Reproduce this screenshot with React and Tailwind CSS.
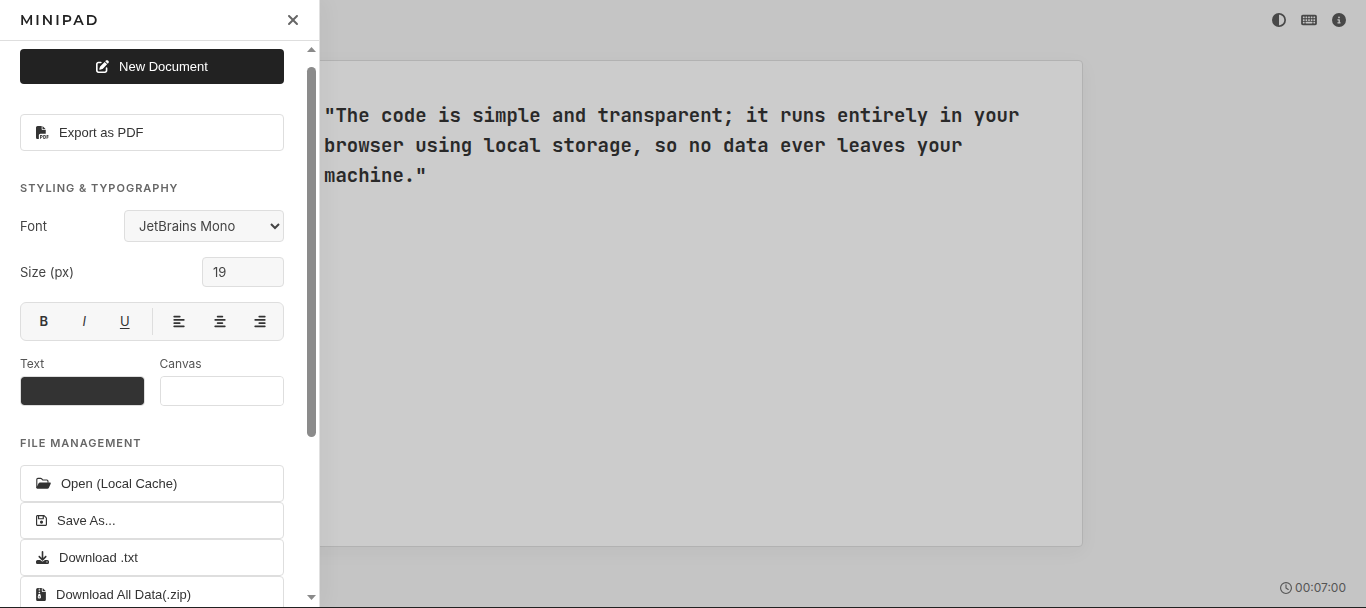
import { useState } from "react";
import {
  FaAlignCenter, FaAlignLeft, FaAlignRight, FaCircleHalfStroke, FaCircleInfo,
  FaDownload, FaFilePdf, FaFileZipper, FaKeyboard, FaPenToSquare,
  FaRegClock, FaRegFloppyDisk, FaXmark,
} from "react-icons/fa6";

// ─── Font stacks ──────────────────────────────────────────────────────────────
const INTER = "font-[Inter,'Liberation_Sans',sans-serif]";
const ARIAL = "font-['Liberation_Sans',Arial,sans-serif]";

// Open folder with an outlined back and a filled front flap
function FolderIcon({ className }) {
  return (
    <svg viewBox="0 0 576 512" className={className} aria-hidden="true">
      <path
        d="M24 430V100a44 44 0 0 1 44-44h112a44 44 0 0 1 30 12l40 40a44 44 0 0 0 30 12h140a44 44 0 0 1 44 44v60"
        fill="none" stroke="currentColor" strokeWidth="44"
      />
      <path
        d="M150 216h392c24 0 40 24 30 46l-76 168c-8 20-28 34-50 34H40c-24 0-38-24-28-46l84-168c10-20 30-34 54-34z"
        fill="currentColor"
      />
    </svg>
  );
}

// ─── Sidebar file actions ─────────────────────────────────────────────────────
const FILE_ACTIONS = [
  { label: "Open (Local Cache)",      Icon: FolderIcon,      iconWidth: "w-[15px]" },
  { label: "Save As...",              Icon: FaRegFloppyDisk, iconWidth: "w-[11px]" },
  { label: "Download .txt",           Icon: FaDownload,      iconWidth: "w-[13px]" },
  { label: "Download All Data(.zip)", Icon: FaFileZipper,    iconWidth: "w-[10px]" },
];

const ALIGNMENTS = [
  { value: "left",   Icon: FaAlignLeft },
  { value: "center", Icon: FaAlignCenter },
  { value: "right",  Icon: FaAlignRight },
];

const NOTE =
  '"The code is simple and transparent; it runs entirely in your browser using local storage, so no data ever leaves your machine."';

// ─── Small pieces ─────────────────────────────────────────────────────────────
function SectionTitle({ children }) {
  return (
    <h2 className="text-[11px] leading-4 font-semibold tracking-[1px] text-[#666] uppercase">
      {children}
    </h2>
  );
}

function ActionButton({ Icon, iconWidth = "w-[13px]", children }) {
  return (
    <button
      type="button"
      className={`${ARIAL} flex h-[37px] w-full shrink-0 items-center gap-2.5 rounded border border-[#dedede] bg-white px-[15px] text-[13px] text-[#333] hover:bg-gray-50`}
    >
      <Icon className={`h-[13px] shrink-0 ${iconWidth}`} />
      <span>{children}</span>
    </button>
  );
}

function FormatButton({ label, className = "", children }) {
  return (
    <button
      type="button"
      aria-label={label}
      className={`flex flex-1 items-center justify-center self-stretch rounded text-[#333] hover:bg-gray-200 ${className}`}
    >
      {children}
    </button>
  );
}

function ColorField({ id, label, value, onChange }) {
  return (
    <div className="flex flex-1 flex-col gap-1">
      <label htmlFor={id} className="text-xs leading-4 text-[#555]">{label}</label>
      <input
        id={id}
        type="color"
        value={value}
        onChange={(e) => onChange(e.target.value)}
        className="h-[30px] w-full cursor-pointer appearance-none rounded border border-[#dedede] [&::-webkit-color-swatch]:rounded-[3px] [&::-webkit-color-swatch]:border-0 [&::-webkit-color-swatch-wrapper]:p-0"
      />
    </div>
  );
}

function ScrollTrack() {
  return (
    <div className="flex w-[15px] shrink-0 flex-col items-center pt-1.5 pb-[7px]" aria-hidden="true">
      <svg width="9" height="5" viewBox="0 0 9 5" fill="#8a8a8a"><path d="M4.5 0 9 5H0z" /></svg>
      <div className="mt-[15px] h-[370px] w-[9px] rounded-full bg-[#8b8b8b]" />
      <svg className="mt-auto" width="9" height="5" viewBox="0 0 9 5" fill="#8a8a8a"><path d="M0 0h9L4.5 5z" /></svg>
    </div>
  );
}

// ─── Sidebar ──────────────────────────────────────────────────────────────────
function Sidebar({ font, setFont, size, setSize, ink, setInk, canvas, setCanvas }) {
  return (
    <aside className="fixed top-0 bottom-px left-0 flex w-80 flex-col border-r border-[#e0e0e0] bg-white shadow-[5px_0_20px_rgba(0,0,0,0.04)]">
      <header className="flex h-[41px] shrink-0 items-center justify-between border-b border-[#dedede] px-5">
        <h1 className="text-sm font-semibold tracking-[2px] text-[#222] font-[Montserrat,Inter,sans-serif]">MINIPAD</h1>
        <button type="button" aria-label="Close menu" className="text-[#666]">
          <FaXmark className="h-4 w-3" />
        </button>
      </header>

      <div className="flex min-h-0 flex-1">
        <div className="flex min-w-0 flex-1 flex-col overflow-hidden pt-2 pr-5 pl-5">
          <button
            type="button"
            className={`${ARIAL} flex h-[35px] shrink-0 items-center justify-center gap-2.5 rounded bg-[#222] text-[13px] font-medium text-white`}
          >
            <FaPenToSquare className="size-[13px]" />
            New Document
          </button>

          <div className="mt-[30px] flex flex-col">
            <ActionButton Icon={FaFilePdf}>Export as PDF</ActionButton>
          </div>

          {/* Styling & typography */}
          <section className="mt-[29px] flex flex-col">
            <SectionTitle>Styling &amp; Typography</SectionTitle>
            <div className="mt-3.5 flex items-center justify-between text-[13px] leading-5 text-[#444]">
              <label htmlFor="font">Font</label>
              <select
                id="font"
                value={font}
                onChange={(e) => setFont(e.target.value)}
                className="h-8 w-40 rounded border border-[#dedede] bg-[#f7f7f7] px-2.5 text-[13px]"
              >
                <option>JetBrains Mono</option>
                <option>Inter</option>
                <option>Montserrat</option>
              </select>
            </div>
            <div className="mt-[15px] flex items-center justify-between text-[13px] leading-5 text-[#444]">
              <label htmlFor="size">Size (px)</label>
              <input
                id="size"
                type="number"
                value={size}
                onChange={(e) => setSize(e.target.value)}
                className="h-[30px] w-[82px] rounded border border-[#dedede] bg-[#f7f7f7] px-2.5 text-[13px]"
              />
            </div>

            <div className="mt-[15px] flex h-[39px] items-center gap-[5px] rounded-md border border-[#dedede] bg-[#f7f7f7] p-[5px] text-[13px]">
              <FormatButton label="Bold" className="font-semibold">B</FormatButton>
              <FormatButton label="Italic" className="italic">I</FormatButton>
              <FormatButton label="Underline" className="underline underline-offset-2">U</FormatButton>
              <span className="mx-1 w-px self-stretch bg-[#dedede]" />
              {ALIGNMENTS.map(({ value, Icon }) => (
                <FormatButton key={value} label={`Align ${value}`}>
                  <Icon className="h-[13px] w-3" />
                </FormatButton>
              ))}
            </div>

            <div className="mt-[15px] flex gap-[15px]">
              <ColorField id="ink" label="Text" value={ink} onChange={setInk} />
              <ColorField id="canvas" label="Canvas" value={canvas} onChange={setCanvas} />
            </div>
          </section>

          {/* File management */}
          <section className="mt-[29px] flex flex-col">
            <SectionTitle>File Management</SectionTitle>
            <div className="mt-3.5 flex flex-col">
              {FILE_ACTIONS.map(({ label, Icon, iconWidth }) => (
                <ActionButton key={label} Icon={Icon} iconWidth={iconWidth}>{label}</ActionButton>
              ))}
            </div>
          </section>
        </div>
        <ScrollTrack />
      </div>
    </aside>
  );
}

// ══════════════════════════════════════════════════════════════════════════════
// APP
// ══════════════════════════════════════════════════════════════════════════════
export default function App() {
  const [font, setFont]     = useState("JetBrains Mono");
  const [size, setSize]     = useState("19");
  const [ink, setInk]       = useState("#333333");
  const [canvas, setCanvas] = useState("#ffffff");
  const [text, setText]     = useState(NOTE);

  return (
    <div className={`${INTER} flex h-screen flex-col border-b border-[#222] bg-[#c5c5c5]`}>
      <nav className="flex h-[60px] shrink-0 items-start justify-end gap-[15px] px-5 pt-[13px] text-[#484848]">
        <button type="button" aria-label="Toggle theme"><FaCircleHalfStroke className="size-[14px]" /></button>
        <button type="button" aria-label="Keyboard shortcuts"><FaKeyboard className="h-[14px] w-4" /></button>
        <button type="button" aria-label="About"><FaCircleInfo className="size-[14px]" /></button>
      </nav>

      <main className="flex min-h-0 flex-1 justify-center">
        <textarea
          aria-label="Document"
          spellCheck={false}
          value={text}
          onChange={(e) => setText(e.target.value)}
          className="w-full max-w-[800px] resize-none overflow-hidden rounded border border-[#b2b2b2] bg-[#cccccc] p-10 text-[19px] leading-[30px] font-bold text-[#292929] shadow-[0_5px_20px_rgba(0,0,0,0.04)] outline-none font-['JetBrains_Mono','DejaVu_Sans_Mono',monospace]"
        />
      </main>

      <footer className="flex h-[60px] shrink-0 items-center justify-end gap-[3px] px-5 pt-[22px] text-xs text-[#555]">
        <FaRegClock className="size-3" />
        <span>00:07:00</span>
      </footer>

      <Sidebar
        font={font} setFont={setFont}
        size={size} setSize={setSize}
        ink={ink} setInk={setInk}
        canvas={canvas} setCanvas={setCanvas}
      />
    </div>
  );
}
